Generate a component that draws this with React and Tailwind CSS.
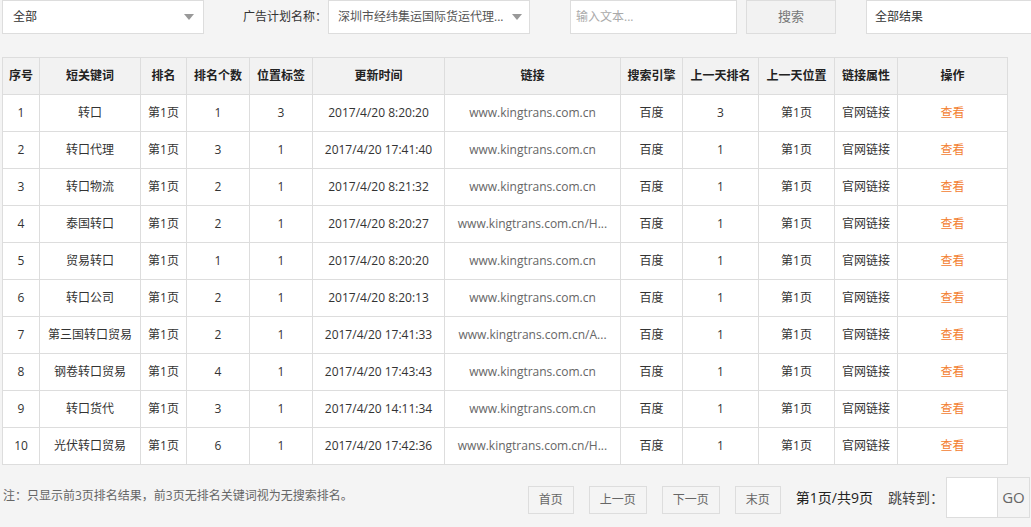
import React from 'react';

const rows = [
  { id: 1, kw: '转口', rank: '第1页', cnt: 1, pos: 3, time: '2017/4/20 8:20:20', url: 'www.kingtrans.com.cn', prev: 3 },
  { id: 2, kw: '转口代理', rank: '第1页', cnt: 3, pos: 1, time: '2017/4/20 17:41:40', url: 'www.kingtrans.com.cn', prev: 1 },
  { id: 3, kw: '转口物流', rank: '第1页', cnt: 2, pos: 1, time: '2017/4/20 8:21:32', url: 'www.kingtrans.com.cn', prev: 1 },
  { id: 4, kw: '泰国转口', rank: '第1页', cnt: 2, pos: 1, time: '2017/4/20 8:20:27', url: 'www.kingtrans.com.cn/H...', prev: 1 },
  { id: 5, kw: '贸易转口', rank: '第1页', cnt: 1, pos: 1, time: '2017/4/20 8:20:20', url: 'www.kingtrans.com.cn', prev: 1 },
  { id: 6, kw: '转口公司', rank: '第1页', cnt: 2, pos: 1, time: '2017/4/20 8:20:13', url: 'www.kingtrans.com.cn', prev: 1 },
  { id: 7, kw: '第三国转口贸易', rank: '第1页', cnt: 2, pos: 1, time: '2017/4/20 17:41:33', url: 'www.kingtrans.com.cn/A...', prev: 1 },
  { id: 8, kw: '钢卷转口贸易', rank: '第1页', cnt: 4, pos: 1, time: '2017/4/20 17:43:43', url: 'www.kingtrans.com.cn', prev: 1 },
  { id: 9, kw: '转口货代', rank: '第1页', cnt: 3, pos: 1, time: '2017/4/20 14:11:34', url: 'www.kingtrans.com.cn', prev: 1 },
  { id: 10, kw: '光伏转口贸易', rank: '第1页', cnt: 6, pos: 1, time: '2017/4/20 17:42:36', url: 'www.kingtrans.com.cn/H...', prev: 1 },
];

const headers = ['序号', '短关键词', '排名', '排名个数', '位置标签', '更新时间', '链接', '搜索引擎', '上一天排名', '上一天位置', '链接属性', '操作'];
const widths = [37, 101, 46, 63, 63, 132, 176, 62, 76, 76, 63, 110];

const Caret = () => (
  <span className="w-0 h-0 border-l-[5px] border-r-[5px] border-t-[6px] border-l-transparent border-r-transparent border-t-[#999]" />
);

const App = () => {
  return (
    <div
      className="w-[1031px] h-[527px] overflow-hidden bg-[#f4f4f4] text-[12px] text-[#333]"
      style={{ fontFamily: '"Open Sans", "Noto Sans CJK SC", sans-serif' }}
    >
      {/* Filters */}
      <div className="flex items-center h-[34px]">
        <div className="ml-[2px] w-[202px] h-[34px] bg-white border border-[#ddd] flex items-center justify-between pl-[10px] pr-[9px]">
          <span>全部</span>
          <Caret />
        </div>
        <span className="ml-[39px] w-[85px]">广告计划名称：</span>
        <div className="w-[202px] h-[34px] bg-white border border-[#ddd] flex items-center justify-between pl-[9px] pr-[7px]">
          <span className="text-[#555]">深圳市经纬集运国际货运代理...</span>
          <Caret />
        </div>
        <div className="ml-[40px] w-[167px] h-[34px] bg-white border border-[#ddd] flex items-center pl-[5px] text-[#aaa]">
          输入文本...
        </div>
        <div className="ml-[9px] w-[90px] h-[34px] bg-[#f2f2f2] border border-[#ddd] flex items-center justify-center text-[#777] text-[13px]">
          搜索
        </div>
        <div className="ml-[30px] flex-1 h-[34px] bg-white border border-[#ddd] border-r-0 flex items-center pl-[8px]">
          全部结果
        </div>
      </div>

      {/* Table */}
      <table className="mt-[23px] ml-[2px] table-fixed border-collapse w-[1006px]">
        <colgroup>
          {widths.map((w, i) => (
            <col key={i} style={{ width: w }} />
          ))}
        </colgroup>
        <thead>
          <tr className="h-[37px] bg-[#f2f2f2]">
            {headers.map((h) => (
              <th key={h} className="border border-[#ddd] font-bold text-center text-[#222] p-0">
                {h}
              </th>
            ))}
          </tr>
        </thead>
        <tbody className="bg-white">
          {rows.map((r) => (
            <tr key={r.id} className="h-[37px] text-center">
              <td className="border border-[#ddd] p-0">{r.id}</td>
              <td className="border border-[#ddd] p-0">{r.kw}</td>
              <td className="border border-[#ddd] p-0">{r.rank}</td>
              <td className="border border-[#ddd] p-0">{r.cnt}</td>
              <td className="border border-[#ddd] p-0">{r.pos}</td>
              <td className="border border-[#ddd] p-0">{r.time}</td>
              <td className="border border-[#ddd] p-0 text-[#666]">{r.url}</td>
              <td className="border border-[#ddd] p-0">百度</td>
              <td className="border border-[#ddd] p-0">{r.prev}</td>
              <td className="border border-[#ddd] p-0">第1页</td>
              <td className="border border-[#ddd] p-0">官网链接</td>
              <td className="border border-[#ddd] p-0 text-[#f3802f]">查看</td>
            </tr>
          ))}
        </tbody>
      </table>

      {/* Footer */}
      <div className="mt-[12px] flex items-center h-[41px]">
        <span className="ml-[3px] text-[#666] -mt-[4px]">注：只显示前3页排名结果，前3页无排名关键词视为无搜索排名。</span>
        <div className="ml-auto mr-[1px] flex items-center">
          {['首页', '上一页', '下一页', '末页'].map((b) => (
            <div
              key={b}
              className={`h-[28px] mt-[5px] mr-[15px] border border-[#ddd] text-[#666] flex items-center justify-center ${b.length === 2 ? 'w-[46px]' : 'w-[58px]'}`}
            >
              {b}
            </div>
          ))}
          <span className="text-[14px] text-[#222]">第1页/共9页</span>
          <span className="ml-[15px] text-[14px] text-[#444]">跳转到：</span>
          <div className="ml-[2px] w-[52px] h-[41px] bg-white border border-[#ddd]" />
          <div className="w-[32px] h-[41px] border border-l-0 border-[#ddd] flex items-center justify-center text-[15px] text-[#666]">
            GO
          </div>
        </div>
      </div>
    </div>
  );
};

export default App;
